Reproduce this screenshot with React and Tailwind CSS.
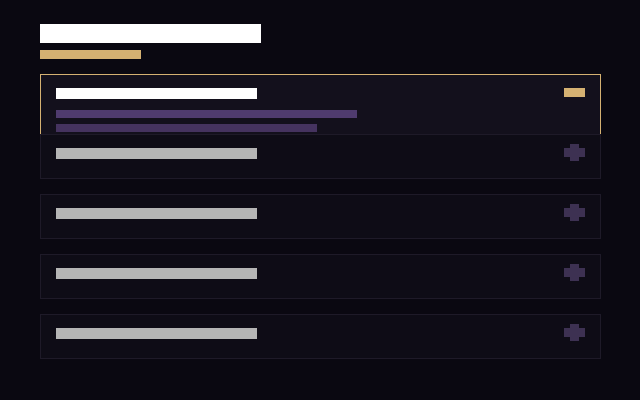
const rows = [0, 1, 2, 3];

const PlusIcon = () => (
  <svg width="21" height="17" viewBox="0 0 21 17" shapeRendering="crispEdges" className="-mt-[4px] shrink-0">
    <rect x="0" y="4" width="21" height="9" fill="#3d3152" />
    <rect x="6" y="0" width="9" height="17" fill="#3d3152" />
  </svg>
);

const App = () => {
  return (
    <div className="w-[640px] h-[400px] bg-[#0a0811] pt-[24px] pl-[40px] overflow-hidden">
      {/* Heading */}
      <div className="w-[221px] h-[19px] bg-white" />
      <div className="mt-[7px] w-[101px] h-[9px] bg-[#d5b172]" />

      <div className="mt-[15px] w-[561px] flex flex-col">
        {/* Open item */}
        <div className="h-[60px] border border-b-0 border-[#d5b172] bg-[#13101c] px-[15px] pt-[13px]">
          <div className="flex justify-between items-start">
            <div className="w-[201px] h-[11px] bg-white" />
            <div className="w-[21px] h-[9px] bg-[#d5b172]" />
          </div>
          <div className="mt-[11px] w-[301px] h-[8px] bg-[#4f3b6e]" />
          <div className="mt-[6px] w-[261px] h-[8px] bg-[#45335f]" />
        </div>

        {/* Closed items */}
        {rows.map((i) => (
          <div
            key={i}
            className={`h-[45px] border border-[#1e1a28] bg-[#0e0c16] px-[15px] pt-[13px] ${i > 0 ? "mt-[15px]" : ""}`}
          >
            <div className="flex justify-between items-start">
              <div className="w-[201px] h-[11px] bg-[#b5b5b5]" />
              <PlusIcon />
            </div>
          </div>
        ))}
      </div>
    </div>
  );
};

export default App;
